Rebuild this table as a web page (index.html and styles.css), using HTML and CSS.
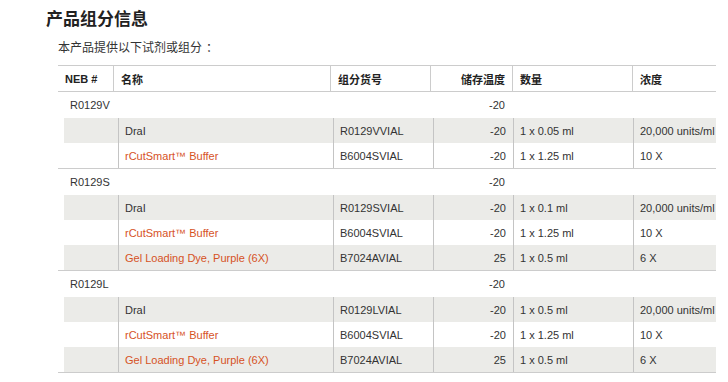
FILE: index.html
```html
<!DOCTYPE html>
<html lang="zh-CN">
<head>
<meta charset="utf-8">
<title>产品组分信息</title>
<link rel="stylesheet" href="styles.css">
</head>
<body>
<div class="page">
  <h1 class="title">产品组分信息</h1>
  <p class="intro">本产品提供以下试剂或组分<span class="colon">：</span></p>
  <div class="table">
    <div class="thead">
      <div class="th">NEB #</div>
      <div class="th">名称</div>
      <div class="th">组分货号</div>
      <div class="th num">储存温度</div>
      <div class="th">数量</div>
      <div class="th">浓度</div>
    </div>

    <div class="group">
      <div class="grow">
        <div class="gc first">R0129V</div>
        <div class="gc"></div>
        <div class="gc"></div>
        <div class="gc num">-20</div>
        <div class="gc"></div>
        <div class="gc"></div>
      </div>
      <div class="sub">
        <div class="srow shade">
          <div class="sc"></div>
          <div class="sc">DraI</div>
          <div class="sc">R0129VVIAL</div>
          <div class="sc num">-20</div>
          <div class="sc">1 x 0.05 ml</div>
          <div class="sc">20,000 units/ml</div>
        </div>
        <div class="srow">
          <div class="sc"></div>
          <div class="sc"><a class="link" href="#">rCutSmart™ Buffer</a></div>
          <div class="sc">B6004SVIAL</div>
          <div class="sc num">-20</div>
          <div class="sc">1 x 1.25 ml</div>
          <div class="sc">10 X</div>
        </div>
      </div>
    </div>

    <div class="group">
      <div class="grow">
        <div class="gc first">R0129S</div>
        <div class="gc"></div>
        <div class="gc"></div>
        <div class="gc num">-20</div>
        <div class="gc"></div>
        <div class="gc"></div>
      </div>
      <div class="sub">
        <div class="srow shade">
          <div class="sc"></div>
          <div class="sc">DraI</div>
          <div class="sc">R0129SVIAL</div>
          <div class="sc num">-20</div>
          <div class="sc">1 x 0.1 ml</div>
          <div class="sc">20,000 units/ml</div>
        </div>
        <div class="srow">
          <div class="sc"></div>
          <div class="sc"><a class="link" href="#">rCutSmart™ Buffer</a></div>
          <div class="sc">B6004SVIAL</div>
          <div class="sc num">-20</div>
          <div class="sc">1 x 1.25 ml</div>
          <div class="sc">10 X</div>
        </div>
        <div class="srow shade">
          <div class="sc"></div>
          <div class="sc"><a class="link" href="#">Gel Loading Dye, Purple (6X)</a></div>
          <div class="sc">B7024AVIAL</div>
          <div class="sc num">25</div>
          <div class="sc">1 x 0.5 ml</div>
          <div class="sc">6 X</div>
        </div>
      </div>
    </div>

    <div class="group">
      <div class="grow">
        <div class="gc first">R0129L</div>
        <div class="gc"></div>
        <div class="gc"></div>
        <div class="gc num">-20</div>
        <div class="gc"></div>
        <div class="gc"></div>
      </div>
      <div class="sub">
        <div class="srow shade">
          <div class="sc"></div>
          <div class="sc">DraI</div>
          <div class="sc">R0129LVIAL</div>
          <div class="sc num">-20</div>
          <div class="sc">1 x 0.5 ml</div>
          <div class="sc">20,000 units/ml</div>
        </div>
        <div class="srow">
          <div class="sc"></div>
          <div class="sc"><a class="link" href="#">rCutSmart™ Buffer</a></div>
          <div class="sc">B6004SVIAL</div>
          <div class="sc num">-20</div>
          <div class="sc">1 x 1.25 ml</div>
          <div class="sc">10 X</div>
        </div>
        <div class="srow shade">
          <div class="sc"></div>
          <div class="sc"><a class="link" href="#">Gel Loading Dye, Purple (6X)</a></div>
          <div class="sc">B7024AVIAL</div>
          <div class="sc num">25</div>
          <div class="sc">1 x 0.5 ml</div>
          <div class="sc">6 X</div>
        </div>
      </div>
    </div>
  </div>
</div>
</body>
</html>
```

FILE: styles.css
```css
html, body {
  margin: 0;
  padding: 0;
  background: #ffffff;
}

body {
  font-family: "Liberation Sans", Arial, "Noto Sans CJK SC", sans-serif;
  font-size: 11px;
  color: #333333;
}

.page {
  padding: 6px 0 0 46px;
}

.title {
  margin: 0;
  font-family: "Noto Sans CJK SC", sans-serif;
  font-size: 17px;
  line-height: 24px;
  font-weight: bold;
  color: #222222;
}

.intro {
  margin: 9px 0 0 12px;
  font-family: "Noto Sans CJK SC", sans-serif;
  font-size: 12px;
  line-height: 16px;
  color: #333333;
}

.colon {
  margin-left: 4px;
}

.table {
  width: 658px;
  margin: 10px 0 0 12px;
}

.thead {
  display: grid;
  grid-template-columns: 55px 217px 100px 82px 120px 84px;
  height: 27px;
  box-sizing: border-box;
  border-top: 1px solid #cccccc;
  border-bottom: 1px solid #cccccc;
}

.th {
  display: flex;
  align-items: center;
  padding: 0 7px;
  font-weight: bold;
  color: #222222;
  white-space: nowrap;
}

.th + .th {
  border-left: 1px solid #cccccc;
}

.num {
  justify-content: flex-end;
}

.group {
  border-bottom: 1px solid #cccccc;
}

.grow {
  display: grid;
  grid-template-columns: 55px 217px 100px 82px 120px 84px;
  height: 26px;
}

.gc {
  display: flex;
  align-items: center;
  padding: 0 7px;
  white-space: nowrap;
}

.gc.first {
  padding-left: 12px;
}

.sub {
  margin-left: 6px;
}

.srow {
  display: grid;
  grid-template-columns: 54px 215px 100px 80px 120px 83px;
  height: 25px;
}

.srow.shade {
  background: #ebebe8;
}

.sc {
  display: flex;
  align-items: center;
  padding: 0 7px;
  white-space: nowrap;
  overflow: hidden;
}

.sc + .sc {
  border-left: 1px solid #c4c4c4;
  padding-left: 6px;
}

.link {
  color: #d6521f;
  text-decoration: none;
}
```
